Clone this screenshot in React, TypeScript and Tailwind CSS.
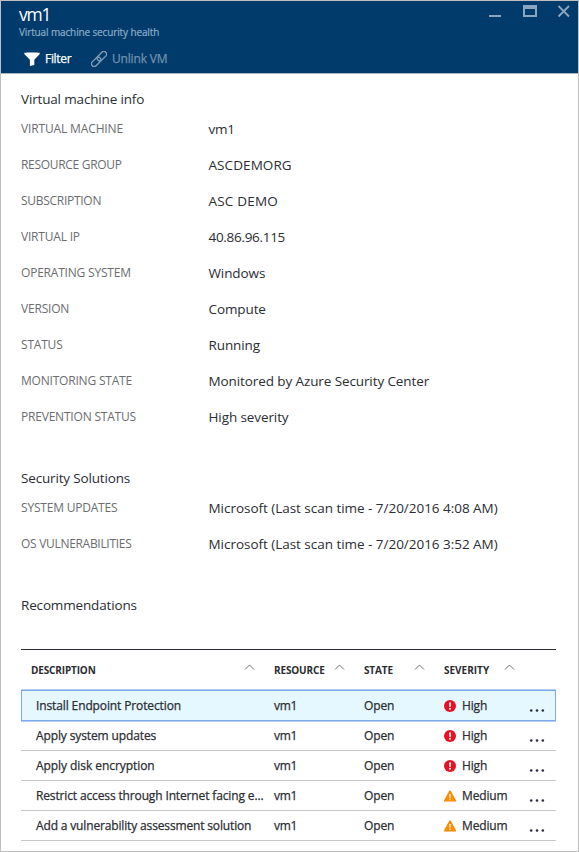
type Field = { label: string; value: string; labelClass?: string; valueClass?: string };
type Severity = 'High' | 'Medium';
type Recommendation = { description: string; severity: Severity; selected?: boolean; textClass?: string };

const info: Field[] = [
  { label: 'VIRTUAL MACHINE', value: 'vm1', labelClass: 'tracking-[-0.14px]', valueClass: 'tracking-[-0.3px]' },
  { label: 'RESOURCE GROUP', value: 'ASCDEMORG', labelClass: 'tracking-[-0.3px]', valueClass: 'tracking-[0.08px]' },
  { label: 'SUBSCRIPTION', value: 'ASC DEMO', labelClass: 'tracking-[-0.28px]', valueClass: 'tracking-[0.2px]' },
  { label: 'VIRTUAL IP', value: '40.86.96.115', valueClass: 'tracking-[-0.3px]' },
  { label: 'OPERATING SYSTEM', value: 'Windows' },
  { label: 'VERSION', value: 'Compute' },
  { label: 'STATUS', value: 'Running' },
  { label: 'MONITORING STATE', value: 'Monitored by Azure Security Center' },
  { label: 'PREVENTION STATUS', value: 'High severity' },
];

const solutions: Field[] = [
  { label: 'SYSTEM UPDATES', value: 'Microsoft (Last scan time - 7/20/2016 4:08 AM)', valueClass: 'tracking-[-0.03px]' },
  { label: 'OS VULNERABILITIES', value: 'Microsoft (Last scan time - 7/20/2016 3:52 AM)', labelClass: 'tracking-[-0.3px]', valueClass: 'tracking-[-0.03px]' },
];

const recommendations: Recommendation[] = [
  { description: 'Install Endpoint Protection', severity: 'High', selected: true },
  { description: 'Apply system updates', severity: 'High' },
  { description: 'Apply disk encryption', severity: 'High', textClass: 'tracking-[-0.06px]' },
  { description: 'Restrict access through Internet facing e...', severity: 'Medium', textClass: 'tracking-[-0.14px]' },
  { description: 'Add a vulnerability assessment solution', severity: 'Medium', textClass: 'tracking-[-0.15px]' },
];

function FieldRow({ label, value, labelClass, valueClass }: Field) {
  return (
    <div className="flex h-9 items-center whitespace-nowrap">
      <dt className={`w-[187.5px] text-[12px] leading-4 text-[#6b6d70] ${labelClass ?? 'tracking-[-0.2px]'}`}>{label}</dt>
      <dd className={`text-[13.5px] leading-4 ${valueClass ?? 'tracking-[-0.1px]'}`}>{value}</dd>
    </div>
  );
}

function SectionTitle({ children }: { children: string }) {
  return <h2 className="h-6 text-[13.5px] leading-6 tracking-[-0.16px]">{children}</h2>;
}

function SortArrow() {
  return (
    <svg width="11" height="7" viewBox="0 0 11 7" fill="none" stroke="#6e7073" className="mb-[5px]">
      <path d="M1 5.5 5.5 1 10 5.5" />
    </svg>
  );
}

function SeverityIcon({ severity }: { severity: Severity }) {
  if (severity === 'High') {
    return (
      <svg width="12" height="12" viewBox="0 0 12 12">
        <circle cx="6" cy="6" r="6" fill="#e81123" />
        <path d="M5 2.400h2L6.700 7H5.300z" fill="#fff" />
        <circle cx="6" cy="8.7" r="1" fill="#fff" />
      </svg>
    );
  }
  return (
    <svg width="12" height="12" viewBox="0 0 12 12">
      <path d="M6 .3c.4 0 .7.2.9.6l5 9.300c.4.8.1 1.300-.7 1.300H.8c-.8 0-1.100-.5-.7-1.300l5-9.300C5.300.500 5.600.300 6 .300z" fill="#ff8c00" />
      <path d="M5.2 4h1.6l-.3 3.8h-1z" fill="#fff" />
      <circle cx="6" cy="9.3" r=".8" fill="#fff" />
    </svg>
  );
}

function MoreDots() {
  return (
    <svg width="16" height="5" viewBox="0 0 16 5" fill="#2b2d42" className="ml-px mt-[9px]">
      <circle cx="2.2" cy="2.5" r="1.3" />
      <circle cx="8" cy="2.5" r="1.3" />
      <circle cx="13.8" cy="2.5" r="1.3" />
    </svg>
  );
}

const columns = 'grid grid-cols-[253px_90px_80px_84px_1fr] items-center';

export default function App() {
  return (
    <div className="h-[852px] w-[579px] overflow-hidden border border-[#bfbfbf] bg-white font-['Open_Sans','Noto_Sans',sans-serif] text-[#2b2d33]">
      <header className="flex h-[73px] justify-between border-b border-[#a9b4bd] bg-[#003b6b]">
        <div className="whitespace-nowrap pl-[18px]">
          <h1 className="mt-[2px] h-[22px] text-[17.5px] leading-[22px] tracking-[-1.2px] text-white">vm1</h1>
          <p className="h-[15px] text-[10px] font-medium leading-[15px] tracking-[-0.13px] text-[#8eabc6] [-webkit-text-stroke:0.2px]">Virtual machine security health</p>
          <div className="mt-[9px] flex h-5 items-center pl-[5px] text-[12px] font-medium leading-5 [-webkit-text-stroke:0.25px]">
            <svg width="16" height="14" viewBox="0 0 16 14" fill="#fff">
              <path d="M.3.800C2 .3 14 .3 15.700.800c.3.600.1 1.100-.4 1.600L10.300 7.800v5.200L5.900 14V7.800L.7 2.400C.2 1.900 0 1.400.3.800z" />
            </svg>
            <span className="ml-[5px] w-[46px] tracking-[-0.3px] text-white">Filter</span>
            <svg width="16" height="16" viewBox="0 0 16 16" fill="none" stroke="#7f9db6" strokeWidth="1.3">
              <g transform="rotate(-45 8 8)">
                <rect x="-1.500" y="5.300" width="11" height="5.400" rx="2.700" />
                <rect x="6.500" y="5.300" width="11" height="5.400" rx="2.700" />
              </g>
            </svg>
            <span className="ml-[5px] tracking-[-0.18px] text-[#7391ae]">Unlink VM</span>
          </div>
        </div>
        <svg width="84" height="20" viewBox="0 0 84 20" fill="none" stroke="#8ba5bd" className="mr-[5px]">
          <path d="M0 15h12" strokeWidth="2" />
          <path d="M35 5.500h12v9.500H35z" strokeWidth="2" />
          <path d="M34 6h14" strokeWidth="4" />
          <path d="M69.500 5l10.500 10.500M80 5 69.500 15.500" strokeWidth="1.8" />
        </svg>
      </header>

      <main className="px-5 pr-[22px]">
        <section className="pt-[13px]">
          <SectionTitle>Virtual machine info</SectionTitle>
          <dl>{info.map((f) => <FieldRow key={f.label} {...f} />)}</dl>
        </section>

        <section className="pt-[31px]">
          <SectionTitle>Security Solutions</SectionTitle>
          <dl>{solutions.map((f) => <FieldRow key={f.label} {...f} />)}</dl>
        </section>

        <section className="pt-[31px]">
          <SectionTitle>Recommendations</SectionTitle>
          <div className="mt-8 w-[535px] whitespace-nowrap border-t border-[#2b2d33]">
            <div className={`${columns} h-[40px] text-[10px] font-bold leading-4 tracking-[-0.15px]`}>
              <div className="flex items-center justify-between pl-[10px] pr-[19px]">DESCRIPTION<SortArrow /></div>
              <div className="flex items-center justify-between pr-[19px]">RESOURCE<SortArrow /></div>
              <div className="flex items-center justify-between pr-[19px]">STATE<SortArrow /></div>
              <div className="flex items-center justify-between pr-[13px] tracking-[0px]">SEVERITY<SortArrow /></div>
            </div>
            {recommendations.map((r) => (
              <div
                key={r.description}
                className={`${columns} text-[12px] font-medium leading-4 [-webkit-text-stroke:0.25px] ${r.selected ? 'h-[31px] bg-[#e5f7ff] shadow-[inset_0_0_0_1px_#7fa9ee,0_-1px_0_0_#b4cdf5,0_1px_0_0_#b4cdf5]' : 'h-[30px] border-b border-[#c8c8c8]'}`}
              >
                <div className={`pl-[15px] ${r.textClass ?? 'tracking-[-0.12px]'}`}>{r.description}</div>
                <div className="tracking-[-0.3px]">vm1</div>
                <div className="tracking-[-0.15px]">Open</div>
                <div className="flex items-center gap-[6px] tracking-[-0.15px]"><SeverityIcon severity={r.severity} />{r.severity}</div>
                <MoreDots />
              </div>
            ))}
          </div>
        </section>
      </main>
    </div>
  );
}
